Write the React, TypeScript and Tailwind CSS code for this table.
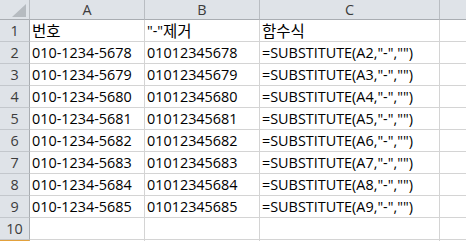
import React from "react";

const K = ({ children }: { children: React.ReactNode }) => (
  <span className="text-[15.5px]" style={{ fontFamily: '"Noto Sans CJK KR", sans-serif' }}>
    {children}
  </span>
);

const rows: React.ReactNode[][] = [
  [<K>번호</K>, <>"-"<K>제거</K></>, <K>함수식</K>],
  ...Array.from({ length: 8 }, (_, i) => {
    const n = 5678 + i;
    return [`010-1234-${n}`, `0101234${n}`, `=SUBSTITUTE(A${i + 2},"-","")`];
  }),
  ["", "", ""],
];

const font = { fontFamily: '"Open Sans", "Noto Sans CJK KR", sans-serif' };

export default function App() {
  return (
    <div className="w-[466px] h-[241px] overflow-hidden bg-white text-[14.4px] text-black" style={font}>
      <div className="grid grid-cols-[30px_115px_115px_180px_1fr]">
        <div className="relative h-[20px] bg-[#dfe3e8] border-r border-b border-r-[#b9bdc2] border-b-[#a9adb2]">
          <svg className="absolute left-[12px] top-[4px]" width="14" height="13" viewBox="0 0 14 13">
            <polygon points="14,0 14,13 0,13" fill="#b6bbc0" />
          </svg>
        </div>
        {["A", "B", "C", ""].map((h, i) => (
          <div
            key={i}
            className={`h-[20px] bg-[#dfe3e8] border-b border-b-[#a9adb2] flex items-center justify-center text-[#3c3c3c] ${i < 3 ? "border-r border-r-[#b9bdc2]" : ""}`}
          >
            {h}
          </div>
        ))}
        {rows.map((r, ri) => (
          <React.Fragment key={ri}>
            <div className="h-[22px] bg-[#dfe3e8] border-r border-b border-r-[#a9adb2] border-b-[#c3c7cc] flex items-center justify-center text-[#3c3c3c]">
              {ri + 1}
            </div>
            {r.map((c, ci) => (
              <div
                key={ci}
                className="h-[22px] border-r border-b border-[#d4d4d4] flex items-center pl-[2px] whitespace-nowrap overflow-hidden"
              >
                {c}
              </div>
            ))}
            <div className="h-[22px] border-b border-[#d4d4d4]" />
          </React.Fragment>
        ))}
        <div className="h-[22px] bg-[#f6d48a] border-t border-t-[#e3a13b] border-r border-r-[#a9adb2]" />
        <div className="h-[22px] border-r border-[#d4d4d4]" />
        <div className="h-[22px] border-r border-[#d4d4d4]" />
        <div className="h-[22px] border-r border-[#d4d4d4]" />
        <div className="h-[22px]" />
      </div>
    </div>
  );
}
